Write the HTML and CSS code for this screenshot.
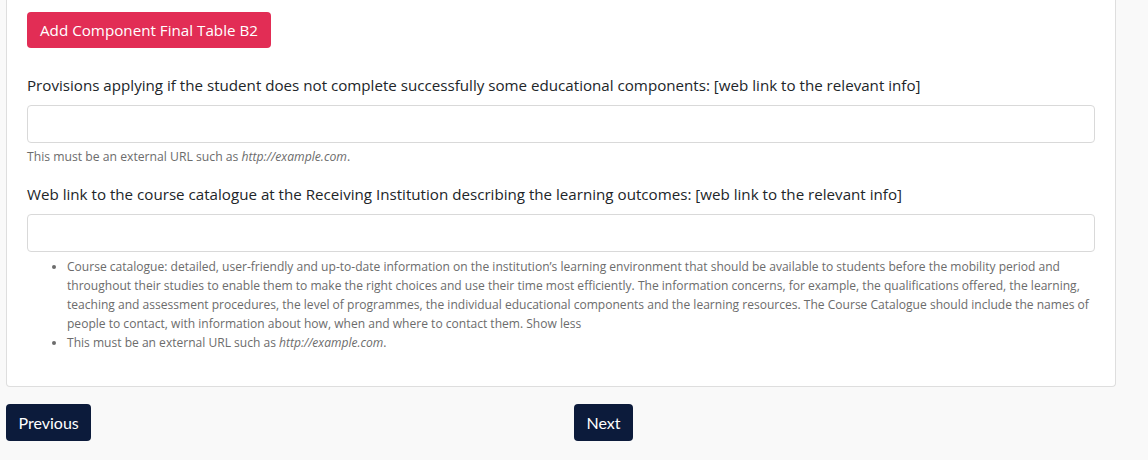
FILE: index.html
```html
<!DOCTYPE html>
<html lang="en">
<head>
    <meta charset="UTF-8">
    <meta name="viewport" content="width=device-width, initial-scale=1.0">
    <title>Learning Agreement</title>
    <link rel="stylesheet" href="styles.css">
</head>
<body>
    <div class="page">
        <div class="card">
            <button class="btn-add" type="button">Add Component Final Table B2</button>

            <div class="field">
                <label class="field-label" for="provisions">Provisions applying if the student does not complete successfully some educational components: [web link to the relevant info]</label>
                <input class="field-input" type="url" id="provisions">
                <div class="help">This must be an external URL such as <em>http://example.com</em>.</div>
            </div>

            <div class="field">
                <label class="field-label" for="catalogue">Web link to the course catalogue at the Receiving Institution describing the learning outcomes: [web link to the relevant info]</label>
                <input class="field-input" type="url" id="catalogue">
                <ul class="help-list">
                    <li>Course catalogue: detailed, user-friendly and up-to-date information on the institution’s learning environment that should be available to students before the mobility period and throughout their studies to enable them to make the right choices and use their time most efficiently. The information concerns, for example, the qualifications offered, the learning, teaching and assessment procedures, the level of programmes, the individual educational components and the learning resources. The Course Catalogue should include the names of people to contact, with information about how, when and where to contact them. Show less</li>
                    <li>This must be an external URL such as <em>http://example.com</em>.</li>
                </ul>
            </div>
        </div>

        <div class="nav">
            <div class="nav-col"><button class="btn-nav" type="button">Previous</button></div>
            <div class="nav-col"><button class="btn-nav" type="button">Next</button></div>
        </div>
    </div>
</body>
</html>
```

FILE: styles.css
```css
/* 全局样式 */
* {
    margin: 0;
    padding: 0;
    box-sizing: border-box;
}

body {
    font-family: 'Open Sans', 'Noto Sans', sans-serif;
    background: #f9f9f9;
    color: #212529;
    height: 100vh;
    overflow: hidden;
}

.page {
    padding: 0 6px;
}

/* 表单卡片 */
.card {
    width: 1110px;
    margin-top: -10px;
    padding: 22px 20px 34px 20px;
    background: #fff;
    border: 1px solid #dedede;
    border-top: none;
    border-radius: 0 0 4px 4px;
}

.btn-add {
    height: 36px;
    padding: 0 13px;
    background: #e22d55;
    color: #fff;
    border: none;
    border-radius: 4px;
    font-family: inherit;
    font-size: 15.2px;
}

.field {
    margin-top: 26px;
}

.field + .field {
    margin-top: 18px;
}

.field-label {
    display: block;
    font-size: 15.15px;
    line-height: 22px;
    margin-bottom: 9px;
}

.field-input {
    display: block;
    width: 100%;
    height: 38px;
    border: 1px solid #d9d9d9;
    border-radius: 4px;
    background: #fff;
}

.help {
    margin-top: 6px;
    font-size: 12.2px;
    line-height: 16px;
    color: #6c6c6c;
}

.help-list {
    margin-top: 5px;
    padding-left: 40px;
    font-size: 12.05px;
    line-height: 19px;
    color: #6c6c6c;
}

/* 翻页按钮 */
.nav {
    display: grid;
    grid-template-columns: 1fr 1fr;
    margin-top: 17px;
}

.btn-nav {
    height: 37px;
    padding: 0 12.5px;
    background: #0c1b3b;
    color: #fff;
    border: none;
    border-radius: 4px;
    font-family: 'Lato', sans-serif;
    font-size: 16px;
}
```
